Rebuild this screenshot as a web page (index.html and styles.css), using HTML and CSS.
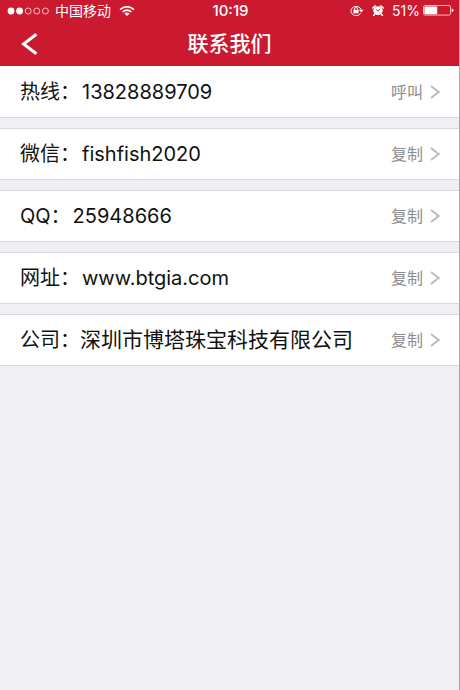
FILE: index.html
```
<!DOCTYPE html>
<html lang="zh-CN">
<head>
<meta charset="utf-8">
<meta name="viewport" content="width=device-width, initial-scale=1">
<title>联系我们</title>
<link rel="stylesheet" href="styles.css">
</head>
<body>
<header class="top">
  <div class="status">
    <div class="status-side">
      <svg class="signal" width="43" height="8" viewBox="0 0 43 8" aria-hidden="true">
        <g fill="#fff"><circle cx="4" cy="4" r="3.4"/><circle cx="12.6" cy="4" r="3.4"/></g>
        <g fill="none" stroke="#fbd5d9" stroke-width=".9"><circle cx="21.2" cy="4" r="3"/><circle cx="29.8" cy="4" r="3"/><circle cx="38.4" cy="4" r="3"/></g>
      </svg>
      <span class="carrier">中国移动</span>
      <svg width="16" height="10" viewBox="0 0 16 10" aria-hidden="true">
        <g fill="none" stroke="#fff" stroke-width="1.6"><path d="M1 3.6Q8-2 15 3.6"/><path d="M3.6 6Q8 2.4 12.4 6"/></g>
        <path d="M5.4 7.5Q8 5.6 10.6 7.5L8 9.9Z" fill="#fff"/>
      </svg>
    </div>
    <time class="clock">10:19</time>
    <div class="status-side status-right">
      <svg width="15" height="11" viewBox="0 0 15 11" aria-hidden="true">
        <path d="M11.6 8.4A5.2 4.6 0 1 1 12.1 4.6" fill="none" stroke="#fff" stroke-width="1"/>
        <path d="M9.8 4.8H14.6L12.2 7.4Z" fill="#fff"/>
        <rect x="4.4" y="4.9" width="5.2" height="3.4" fill="#fff"/>
        <path d="M5.4 5V3.9Q5.4 2.6 7 2.6T8.6 3.9V5" fill="none" stroke="#fff" stroke-width=".9"/>
      </svg>
      <svg class="alarm" width="12" height="11" viewBox="0 0 12 11" aria-hidden="true">
        <ellipse cx="6" cy="5.6" rx="4.7" ry="4.4" fill="#fff"/>
        <path d="M.8 3 3.2.9M11.2 3 8.8.9M2.6 9.2 1.6 10.4M9.4 9.2 10.4 10.4" stroke="#fff" stroke-width="1.5" stroke-linecap="round"/>
        <path d="M3.9 4.3 6 6 8.2 3.9" fill="none" stroke="#cb1a30" stroke-width=".9"/>
      </svg>
      <span class="percent">51%</span>
      <svg width="31" height="11" viewBox="0 0 31 11" aria-hidden="true">
        <rect x=".5" y=".5" width="27" height="9.6" rx="1.6" fill="none" stroke="#f6b9c0"/>
        <rect x="1.4" y="1.4" width="12.8" height="7.8" rx=".6" fill="#fff"/>
        <path d="M28.6 3.4Q30.4 3.6 30.4 5.3T28.6 7.2Z" fill="#fff"/>
      </svg>
    </div>
  </div>
  <div class="nav">
    <button class="back" type="button" aria-label="返回">
      <svg width="18" height="22" viewBox="0 0 18 22" aria-hidden="true"><path d="M15.4 1.3 2.6 11 15.4 20.7" fill="none" stroke="#fff" stroke-width="3"/></svg>
    </button>
    <h1 class="title">联系我们</h1>
  </div>
</header>
<main class="list">
  <section class="row">
    <span class="label">热线：</span><span class="value">13828889709</span>
    <button class="action" type="button">呼叫<svg class="chevron" width="10" height="14" viewBox="0 0 10 14" aria-hidden="true"><path d="M1 1 8.6 7 1 13"/></svg></button>
  </section>
  <section class="row">
    <span class="label">微信：</span><span class="value">fishfish2020</span>
    <button class="action" type="button">复制<svg class="chevron" width="10" height="14" viewBox="0 0 10 14" aria-hidden="true"><path d="M1 1 8.6 7 1 13"/></svg></button>
  </section>
  <section class="row">
    <span class="label">QQ：</span><span class="value">25948666</span>
    <button class="action" type="button">复制<svg class="chevron" width="10" height="14" viewBox="0 0 10 14" aria-hidden="true"><path d="M1 1 8.6 7 1 13"/></svg></button>
  </section>
  <section class="row">
    <span class="label">网址：</span><span class="value">www.btgia.com</span>
    <button class="action" type="button">复制<svg class="chevron" width="10" height="14" viewBox="0 0 10 14" aria-hidden="true"><path d="M1 1 8.6 7 1 13"/></svg></button>
  </section>
  <section class="row">
    <span class="label">公司：</span><span class="value company">深圳市博塔珠宝科技有限公司</span>
    <button class="action" type="button">复制<svg class="chevron" width="10" height="14" viewBox="0 0 10 14" aria-hidden="true"><path d="M1 1 8.6 7 1 13"/></svg></button>
  </section>
</main>
</body>
</html>
```
FILE: styles.css
```
* {
  box-sizing: border-box;
}

body {
  margin: 0;
  min-height: 100vh;
  background: #efeff4;
  border-right: 1px solid #a9a9ad;
  color: #111;
  font-family: Inter, "Noto Sans CJK SC", sans-serif;
}

button {
  border: 0;
  padding: 0;
  background: none;
  font: inherit;
  color: inherit;
}

svg {
  display: block;
  flex: none;
}

.top {
  background: #cb1a30;
  border-bottom: 1px solid #b3182b;
  color: #fff;
}

.status {
  display: grid;
  grid-template-columns: 1fr auto 1fr;
  align-items: center;
  height: 21px;
  padding: 0 5px 0 7px;
}

.status-side {
  display: flex;
  align-items: center;
  line-height: 20px;
}

.status-right {
  justify-content: flex-end;
}

.carrier {
  margin: 0 8px 0 5px;
  font-size: 14px;
}

.clock {
  font-size: 15px;
  font-weight: 500;
  line-height: 20px;
}

.alarm {
  margin: 0 8px;
}

.percent {
  margin-right: 3px;
  font-size: 14px;
}

.nav {
  display: grid;
  grid-template-columns: 1fr auto 1fr;
  align-items: center;
  height: 44px;
  padding: 2px 21px 0;
}

.back {
  justify-self: start;
}

.title {
  margin: 0;
  font-size: 21px;
  font-weight: 500;
  line-height: 28px;
}

.list {
  display: flex;
  flex-direction: column;
  gap: 10px;
}

.row {
  display: flex;
  align-items: center;
  height: 52px;
  padding: 0 19px 0 20px;
  background: #fff;
  border-bottom: 1px solid #d9d9dc;
  font-size: 20px;
  line-height: 28px;
}

.row + .row {
  border-top: 1px solid #d9d9dc;
}

.value {
  padding-left: 2px;
}

.company {
  padding-left: 0;
  font-size: 21px;
}

.action {
  display: flex;
  align-items: center;
  gap: 7px;
  margin-left: auto;
  color: #8c8c8c;
  font-size: 16px;
}

.chevron {
  fill: none;
  stroke: #bdbdc1;
  stroke-width: 2;
}
```
